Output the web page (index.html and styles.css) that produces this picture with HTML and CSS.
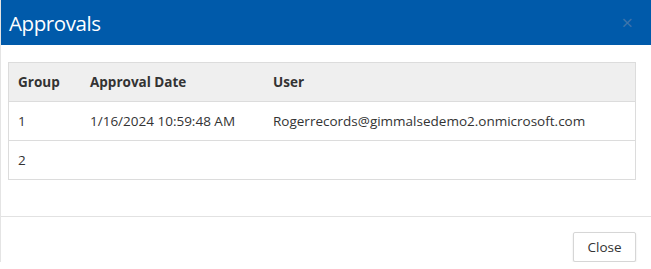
FILE: index.html
```html
<!DOCTYPE html>
<html lang="en">
<head>
    <link rel="stylesheet" href="styles.css">
</head>
<body>
<div class="modal">
    <div class="modal-header">
        <h2 class="modal-title">Approvals</h2>
        <span class="close-x">&times;</span>
    </div>
    <div class="modal-body">
        <table class="approvals-table">
            <thead>
            <tr>
                <th class="col-group">Group</th>
                <th class="col-date">Approval Date</th>
                <th>User</th>
            </tr>
            </thead>
            <tbody>
            <tr>
                <td>1</td>
                <td>1/16/2024 10:59:48 AM</td>
                <td>Rogerrecords@gimmalsedemo2.onmicrosoft.com</td>
            </tr>
            <tr>
                <td>2</td>
                <td></td>
                <td></td>
            </tr>
            </tbody>
        </table>
    </div>
    <div class="modal-footer">
        <button class="btn-close">Close</button>
    </div>
</div>
</body>
</html>
```

FILE: styles.css
```css
body {
    margin: 0;
    background: #fff;
    font-family: "Open Sans", "Noto Sans", sans-serif;
    color: #333;
}

.modal {
    width: 651px;
    border-left: 1px solid #e4e4e4;
    box-sizing: border-box;
}

.modal-header {
    height: 45px;
    background-color: #005aaa;
    display: flex;
    align-items: center;
    justify-content: space-between;
    padding: 0 18px 0 8px;
}

.modal-title {
    margin: 0;
    color: #fff;
    font-size: 20.5px;
    font-weight: normal;
    letter-spacing: -0.4px;
}

.close-x {
    color: #3d74ab;
    font-size: 20px;
    line-height: 1;
}

.modal-body {
    padding: 17px 15px 36px 7px;
}

.approvals-table {
    width: 100%;
    border-collapse: collapse;
    border: 1px solid #dcdcdc;
    font-size: 13.5px;
}

.approvals-table th,
.approvals-table td {
    text-align: left;
    height: 38px;
    padding: 0 9px;
    border-top: 1px solid #dcdcdc;
}

.approvals-table th {
    background-color: #efefef;
    font-weight: 700;
}

.col-group {
    width: 54px;
}

.col-date {
    width: 165px;
}

.modal-footer {
    border-top: 1px solid #e2e2e2;
    display: flex;
    justify-content: flex-end;
    padding: 15px 15px 0 0;
}

.btn-close {
    width: 63px;
    height: 30px;
    background: #fff;
    border: 1px solid #d6d6d6;
    border-radius: 2px;
    box-shadow: 0 1px 2px rgba(0, 0, 0, 0.12);
    font-family: "Open Sans", "Noto Sans", sans-serif;
    font-size: 13.5px;
    color: #333;
}
```
